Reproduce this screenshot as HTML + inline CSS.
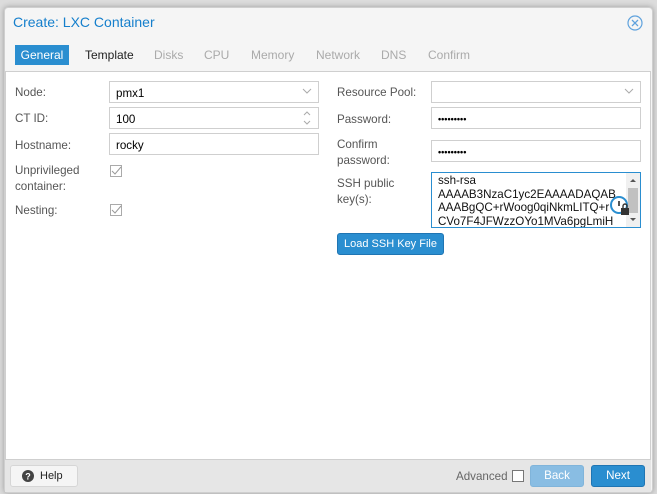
<!DOCTYPE html>
<html><head><meta charset="utf-8"><style>
*{box-sizing:border-box;margin:0;padding:0}
body{width:657px;height:494px;background:#dcdcdc;font-family:"Liberation Sans",sans-serif;font-size:11.6px;color:#555;position:relative;overflow:hidden}
.a{position:absolute}
.dlg{left:4px;top:7px;width:649px;height:486px;background:#f5f5f5;border:1px solid #cfcfcf;border-radius:4px;box-shadow:0 0 6px rgba(0,0,0,.3)}
.lbl{position:absolute;font-size:11.6px;color:#555;line-height:17px}
.inp{position:absolute;height:22px;border:1px solid #cfcfcf;background:#fff;font-size:11.6px;color:#000;padding:5px 6px 0;line-height:13px}
.tab{position:absolute;top:45px;height:20px;line-height:20px;font-size:12px;color:#aaa}
.chk{position:absolute;width:12px;height:12px;border:1px solid #aaa}
.btn{position:absolute;height:22px;border-radius:3px;color:#fff;font-size:11.6px;text-align:center;line-height:20px}
</style></head><body>
<div class="a dlg"></div>
<div class="a" style="left:13px;top:14px;font-size:14px;color:#157fcc">Create: LXC Container</div>
<svg class="a" style="left:627px;top:15px" width="16" height="16" viewBox="0 0 16 16"><circle cx="8" cy="8" r="7" fill="none" stroke="#5fa2dd" stroke-width="1.2"/><path d="M5 5L11 11M11 5L5 11" stroke="#5fa2dd" stroke-width="1.3"/></svg>
<div class="tab" style="left:15px;width:54px;background:#2a8ed0;color:#fff;text-align:center">General</div>
<div class="tab" style="left:85px;color:#222">Template</div>
<div class="tab" style="left:154px">Disks</div>
<div class="tab" style="left:204px">CPU</div>
<div class="tab" style="left:251px">Memory</div>
<div class="tab" style="left:316px">Network</div>
<div class="tab" style="left:381px">DNS</div>
<div class="tab" style="left:428px">Confirm</div>
<div class="a" style="left:5px;top:71px;width:646px;height:389px;background:#fff;border:1px solid #cfcfcf"></div>
<div class="lbl" style="left:15px;top:84px">Node:</div>
<div class="inp" style="left:109px;top:81px;width:210px">pmx1</div>
<svg class="a" style="left:302px;top:87px" width="10" height="8"><path d="M1 2L5 6L9 2" fill="none" stroke="#aaa"/></svg>
<div class="lbl" style="left:15px;top:110px">CT ID:</div>
<div class="inp" style="left:109px;top:107px;width:210px">100</div>
<svg class="a" style="left:302px;top:110px" width="10" height="16"><path d="M2 5L5 2L8 5M2 11L5 14L8 11" fill="none" stroke="#aaa"/></svg>
<div class="lbl" style="left:15px;top:137px">Hostname:</div>
<div class="inp" style="left:109px;top:133px;width:210px">rocky</div>
<div class="lbl" style="left:15px;top:163px;line-height:16px">Unprivileged<br>container:</div>
<div class="chk" style="left:110px;top:165px"></div>
<svg class="a" style="left:110px;top:165px" width="12" height="12"><path d="M2 6L5 9L11 2" fill="none" stroke="#999"/></svg>
<div class="lbl" style="left:15px;top:202px">Nesting:</div>
<div class="chk" style="left:110px;top:204px"></div>
<svg class="a" style="left:110px;top:204px" width="12" height="12"><path d="M2 6L5 9L11 2" fill="none" stroke="#999"/></svg>
<div class="lbl" style="left:337px;top:84px">Resource Pool:</div>
<div class="inp" style="left:431px;top:81px;width:210px"></div>
<svg class="a" style="left:624px;top:87px" width="10" height="8"><path d="M1 2L5 6L9 2" fill="none" stroke="#aaa"/></svg>
<div class="lbl" style="left:337px;top:111px">Password:</div>
<div class="inp" style="left:431px;top:107px;width:210px;font-size:9px;font-weight:bold">•••••••••</div>
<div class="lbl" style="left:337px;top:137px;line-height:16px">Confirm<br>password:</div>
<div class="inp" style="left:431px;top:140px;width:210px;font-size:9px;font-weight:bold">•••••••••</div>
<div class="lbl" style="left:337px;top:176px;line-height:16px">SSH public<br>key(s):</div>
<div class="a" style="left:431px;top:172px;width:210px;height:56px;border:1px solid #2a8ed0;background:#fff;overflow:hidden">
<div style="padding:1px 0 0 6px;font-size:11.6px;color:#111;line-height:13.5px;white-space:nowrap">ssh-rsa<br>AAAAB3NzaC1yc2EAAAADAQAB<br>AAABgQC+rWoog0qiNkmLITQ+r<br>CVo7F4JFWzzOYo1MVa6pgLmiH</div>
<div class="a" style="right:0;top:0;width:14px;height:54px;background:#f0f0f0"></div>
<div class="a" style="right:2px;top:15px;width:10px;height:25px;background:#c1c1c1"></div>
<svg class="a" style="right:2px;top:3px" width="10" height="48"><path d="M2 6L5 3L8 6Z M2 42L5 45L8 42Z" fill="#555"/></svg>
</div>
<svg class="a" style="left:608px;top:195px" width="24" height="22"><circle cx="11" cy="10" r="8" fill="#fff" stroke="#2a8ed0" stroke-width="2"/><path d="M11 6V11" stroke="#555" stroke-width="2"/><rect x="13" y="13" width="8" height="7" fill="#333"/><path d="M15 13V11a2 2 0 0 1 4 0V13" fill="none" stroke="#333" stroke-width="1.4"/></svg>
<div class="btn" style="left:337px;top:233px;width:107px;background:#2a8ed0;border:1px solid #1f75b3;font-size:11px">Load SSH Key File</div>
<div class="a" style="left:5px;top:460px;width:646px;height:32px;background:#e6e6e6"></div>
<div class="a" style="left:10px;top:465px;width:68px;height:22px;background:#f5f5f5;border:1px solid #d6d6d6;border-radius:3px;color:#222;line-height:20px;padding-left:29px;font-size:11px">Help</div>
<svg class="a" style="left:22px;top:470px" width="12" height="12"><circle cx="6" cy="6" r="6" fill="#444"/><text x="6" y="9.5" font-size="9" font-weight="bold" fill="#fff" text-anchor="middle" font-family="Liberation Sans">?</text></svg>
<div class="a" style="left:456px;top:470px;color:#666">Advanced</div>
<div class="a" style="left:512px;top:470px;width:12px;height:12px;border:1px solid #777;background:#fff"></div>
<div class="btn" style="left:530px;top:465px;width:54px;background:#89bde3;border:1px solid #80b4da">Back</div>
<div class="btn" style="left:591px;top:465px;width:54px;background:#2a8ed0;border:1px solid #1f75b3">Next</div>
</body></html>
